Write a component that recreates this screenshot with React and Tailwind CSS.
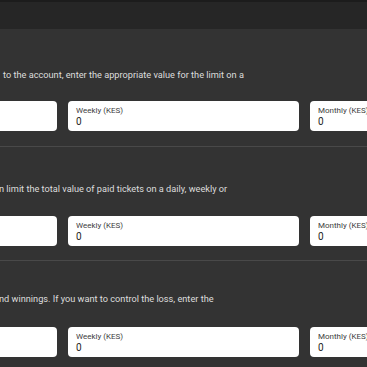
import React from "react";

function Field({ label }) {
  return (
    <div className="h-[30px] bg-white rounded-[4px] pl-[8px] pt-[5px] flex flex-col">
      <span className="text-[8px] leading-[10px] text-[#3c3c3c]">{label}</span>
      <span className="text-[10px] leading-[10px] text-[#1e1e1e] mt-[1px]">0</span>
    </div>
  );
}

function Fields() {
  return (
    <div className="ml-[-174px] w-[715px] grid grid-cols-3 gap-[11px]">
      <Field label="Daily (KES)" />
      <Field label="Weekly (KES)" />
      <Field label="Monthly (KES)" />
    </div>
  );
}

export default function App() {
  return (
    <div
      className="w-[367px] h-[367px] overflow-hidden bg-[#333333]"
      style={{ fontFamily: "Roboto, 'Noto Sans', sans-serif" }}
    >
      <div className="h-[29px] bg-[#262626] border-t-2 border-[#1c1c1c]" />

      <div className="pt-[39px] pb-[15px]">
        <p className="text-[9.2px] leading-[14px] text-[#dddddd] pl-[3px] whitespace-nowrap">
          to the account, enter the appropriate value for the limit on a
        </p>
        <div className="mt-[19px]">
          <Fields />
        </div>
      </div>

      <div className="border-t border-[#494949] pt-[35px] pb-[14px]">
        <p className="text-[9.2px] leading-[14px] text-[#dddddd] ml-[-1px] whitespace-nowrap">
          n limit the total value of paid tickets on a daily, weekly or
        </p>
        <div className="mt-[20px]">
          <Fields />
        </div>
      </div>

      <div className="border-t border-[#494949] pt-[31px] pb-[14px]">
        <p className="text-[9.2px] leading-[14px] text-[#dddddd] ml-[-1px] whitespace-nowrap">
          nd winnings. If you want to control the loss, enter the
        </p>
        <div className="mt-[21px]">
          <Fields />
        </div>
      </div>
    </div>
  );
}
